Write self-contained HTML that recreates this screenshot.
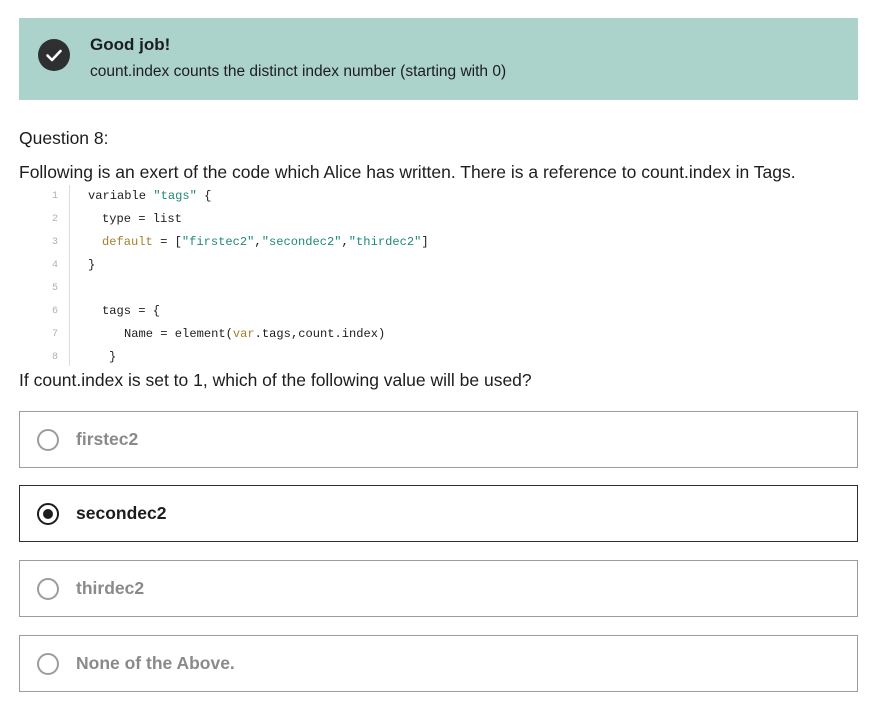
<!DOCTYPE html>
<html><head><meta charset="utf-8"><style>
*{margin:0;padding:0;box-sizing:border-box}
body{width:870px;height:702px;background:#fff;font-family:"Liberation Sans",sans-serif;color:#1c1d1f;position:relative;overflow:hidden}
.banner{position:absolute;left:19px;top:18px;width:839px;height:82px;background:#acd2cc}
.check{position:absolute;left:19px;top:21px;width:32px;height:32px;border-radius:50%;background:#2d2f31}
.t1{position:absolute;left:71px;top:17px;font-weight:bold;font-size:17px}
.t2{position:absolute;left:71px;top:45px;font-size:15.5px}
.q{position:absolute;left:19px;top:128px;font-size:17.5px}
.p{position:absolute;left:19px;top:162px;font-size:17.5px}
.code{position:absolute;left:0;top:187px;font-family:"Liberation Mono",monospace;font-size:12.1px}
.ln{position:absolute;left:46px;width:12px;text-align:right;color:#b0b0b0;font-size:10px}
.bar{position:absolute;left:69px;top:-2px;width:1px;height:181px;background:#ddd}
.cl{position:absolute;white-space:pre;color:#1c1d1f}
.s{color:#1e8a7a}.k{color:#a67f2c}
.p2{position:absolute;left:19px;top:370px;font-size:17.5px}
.opt{position:absolute;left:19px;width:839px;height:57px;border:1px solid #9c9c9c}
.opt.sel{border-color:#2d2f31}
.opt .r{position:absolute;left:17px;top:17px;width:22px;height:22px;border-radius:50%;border:2px solid #9c9c9c}
.opt.sel .r{border-color:#1c1d1f}
.opt.sel .r:after{content:"";position:absolute;left:4px;top:4px;width:10px;height:10px;border-radius:50%;background:#1c1d1f}
.opt span{position:absolute;left:56px;top:17px;font-weight:bold;font-size:17.5px;color:#8a8a8a}
.opt.sel span{color:#1c1d1f}
</style></head><body>
<div class="banner">
<div class="check"><svg width="32" height="32" viewBox="0 0 32 32"><path d="M9.5 16.5l4.5 4.5 8.5-9" fill="none" stroke="#fff" stroke-width="2.6" stroke-linecap="round" stroke-linejoin="round"/></svg></div>
<div class="t1">Good job!</div>
<div class="t2">count.index counts the distinct index number (starting with 0)</div>
</div>
<div class="q">Question 8:</div>
<div class="p">Following is an exert of the code which Alice has written. There is a reference to count.index in Tags.</div>
<div class="code">
<div class="bar"></div>
<div class="ln" style="top:4px">1</div><div class="ln" style="top:27px">2</div><div class="ln" style="top:50px">3</div><div class="ln" style="top:73px">4</div><div class="ln" style="top:96px">5</div><div class="ln" style="top:119px">6</div><div class="ln" style="top:142px">7</div><div class="ln" style="top:165px">8</div>
<div class="cl" style="left:88px;top:2px">variable <span class="s">"tags"</span> {</div>
<div class="cl" style="left:102px;top:25px">type = list</div>
<div class="cl" style="left:102px;top:48px"><span class="k">default</span> = [<span class="s">"firstec2"</span>,<span class="s">"secondec2"</span>,<span class="s">"thirdec2"</span>]</div>
<div class="cl" style="left:88px;top:71px">}</div>
<div class="cl" style="left:102px;top:117px">tags = {</div>
<div class="cl" style="left:124px;top:140px">Name = element(<span class="k">var</span>.tags,count.index)</div>
<div class="cl" style="left:109px;top:163px">}</div>
</div>
<div class="p2">If count.index is set to 1, which of the following value will be used?</div>
<div class="opt" style="top:411px"><div class="r"></div><span>firstec2</span></div>
<div class="opt sel" style="top:485px"><div class="r"></div><span>secondec2</span></div>
<div class="opt" style="top:560px"><div class="r"></div><span>thirdec2</span></div>
<div class="opt" style="top:635px"><div class="r"></div><span>None of the Above.</span></div>
</body></html>
